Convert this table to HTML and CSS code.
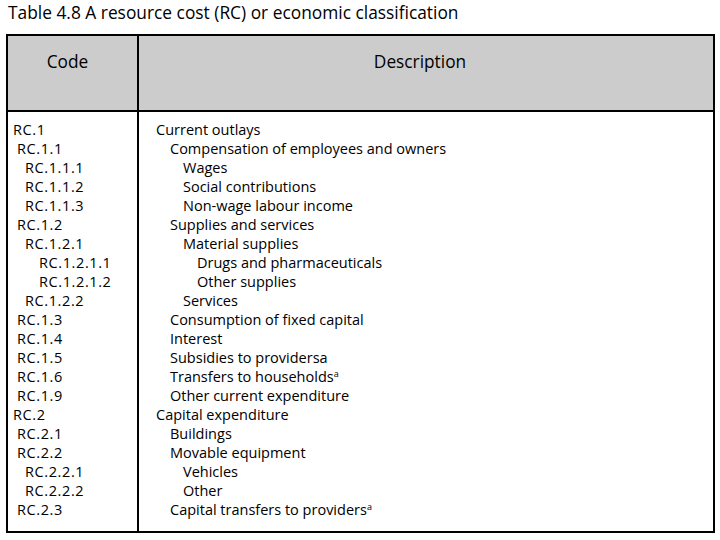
FILE: index.html
```html
<!DOCTYPE html>
<html>
<head>
<meta charset="utf-8">
<link rel="stylesheet" href="styles.css">
</head>
<body>
<h1 class="title">Table 4.8 A resource cost (RC) or economic classification</h1>
<div class="tbl">
  <div class="head">
    <div class="hcode">Code</div>
    <div class="hdesc">Description</div>
  </div>
  <div class="body">
    <div class="codes">
      <div class="l0">RC.1</div>
      <div class="l1">RC.1.1</div>
      <div class="l2">RC.1.1.1</div>
      <div class="l2">RC.1.1.2</div>
      <div class="l2">RC.1.1.3</div>
      <div class="l1">RC.1.2</div>
      <div class="l2">RC.1.2.1</div>
      <div class="l3">RC.1.2.1.1</div>
      <div class="l3">RC.1.2.1.2</div>
      <div class="l2">RC.1.2.2</div>
      <div class="l1">RC.1.3</div>
      <div class="l1">RC.1.4</div>
      <div class="l1">RC.1.5</div>
      <div class="l1">RC.1.6</div>
      <div class="l1">RC.1.9</div>
      <div class="l0">RC.2</div>
      <div class="l1">RC.2.1</div>
      <div class="l1">RC.2.2</div>
      <div class="l2">RC.2.2.1</div>
      <div class="l2">RC.2.2.2</div>
      <div class="l1">RC.2.3</div>
    </div>
    <div class="descs">
      <div class="d0">Current outlays</div>
      <div class="d1">Compensation of employees and owners</div>
      <div class="d2">Wages</div>
      <div class="d2">Social contributions</div>
      <div class="d2">Non-wage labour income</div>
      <div class="d1">Supplies and services</div>
      <div class="d2">Material supplies</div>
      <div class="d3">Drugs and pharmaceuticals</div>
      <div class="d3">Other supplies</div>
      <div class="d2">Services</div>
      <div class="d1">Consumption of fixed capital</div>
      <div class="d1">Interest</div>
      <div class="d1">Subsidies to providersa</div>
      <div class="d1">Transfers to households<sup>a</sup></div>
      <div class="d1">Other current expenditure</div>
      <div class="d0">Capital expenditure</div>
      <div class="d1">Buildings</div>
      <div class="d1">Movable equipment</div>
      <div class="d2">Vehicles</div>
      <div class="d2">Other</div>
      <div class="d1">Capital transfers to providers<sup>a</sup></div>
    </div>
  </div>
</div>
</body>
</html>
```
FILE: styles.css
```css
html, body {
  margin: 0;
  padding: 0;
  background: #fff;
}
body {
  font-family: "Open Sans", "Noto Sans", sans-serif;
  color: #000;
}
.title {
  margin: 0;
  padding: 0 0 0 8px;
  height: 34px;
  font-size: 17.35px;
  font-weight: normal;
  line-height: 24px;
}
.tbl {
  margin-left: 6px;
  width: 709px;
  height: 499px;
  box-sizing: border-box;
  border: 2px solid #000;
  display: flex;
  flex-direction: column;
}
.head {
  display: grid;
  grid-template-columns: 131px 1fr;
  height: 76px;
  background: #cccccc;
  border-bottom: 2px solid #000;
  box-sizing: border-box;
  font-size: 17.3px;
}
.hcode {
  border-right: 2px solid #000;
  text-align: center;
  padding: 14px 10px 0 0;
}
.hdesc {
  text-align: center;
  padding: 14px 12px 0 0;
}
.body {
  flex: 1;
  display: grid;
  grid-template-columns: 131px 1fr;
  font-size: 14.5px;
  line-height: 19px;
}
.codes {
  border-right: 2px solid #000;
  padding: 8px 0 0 5px;
  letter-spacing: 0.6px;
}
.descs {
  padding: 8px 0 0 0;
}
.l0 { padding-left: 0; }
.l1 { padding-left: 4px; }
.l2 { padding-left: 12px; }
.l3 { padding-left: 26px; }
.d0 { padding-left: 17px; }
.d1 { padding-left: 31px; }
.d2 { padding-left: 44px; }
.d3 { padding-left: 58px; }
sup {
  font-size: 9px;
  line-height: 0;
  vertical-align: 5px;
}
```
